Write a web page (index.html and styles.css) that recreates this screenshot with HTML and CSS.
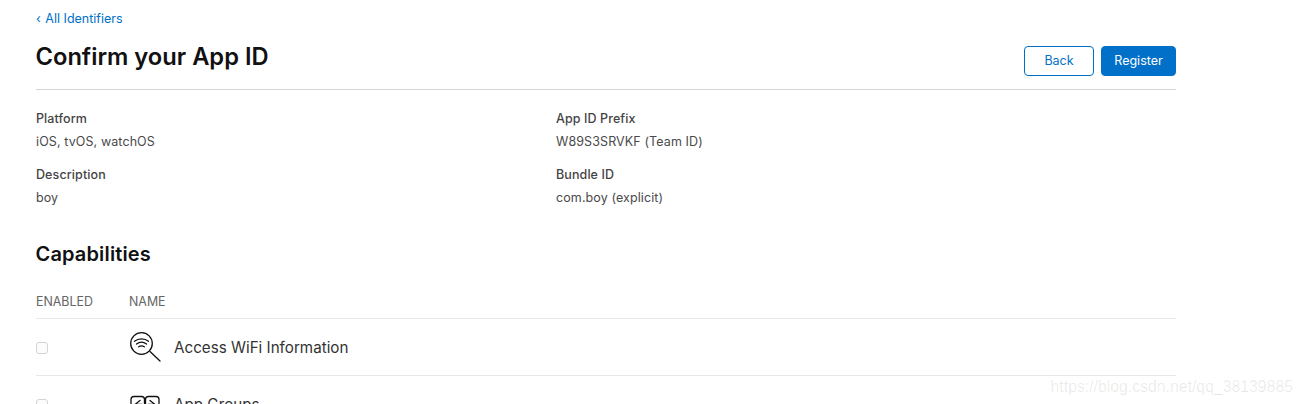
FILE: index.html
```html
<!DOCTYPE html>
<html lang="en">
<head>
  <meta charset="UTF-8" />
  <title>Confirm your App ID</title>
  <link rel="stylesheet" href="styles.css">
</head>
<body>
  <div class="container">
    <a class="back-link" href="#"><span class="chevron">‹</span> All Identifiers</a>

    <div class="header">
      <h1>Confirm your App ID</h1>
      <div class="actions">
        <button class="button outline">Back</button>
        <button class="button primary">Register</button>
      </div>
    </div>

    <div class="details">
      <div class="field">
        <div class="label">Platform</div>
        <div class="value">iOS, tvOS, watchOS</div>
      </div>
      <div class="field">
        <div class="label">App ID Prefix</div>
        <div class="value">W89S3SRVKF (Team ID)</div>
      </div>
      <div class="field">
        <div class="label">Description</div>
        <div class="value">boy</div>
      </div>
      <div class="field">
        <div class="label">Bundle ID</div>
        <div class="value">com.boy (explicit)</div>
      </div>
    </div>

    <h2>Capabilities</h2>

    <div class="table-head">
      <div class="col-enabled">ENABLED</div>
      <div class="col-name">NAME</div>
    </div>

    <div class="row">
      <div class="col-enabled"><span class="checkbox"></span></div>
      <div class="col-name">
        <svg class="cap-icon" viewBox="0 0 32 32" fill="none" stroke="#111" stroke-width="1.3" stroke-linecap="round">
          <circle cx="12.5" cy="12.5" r="10.8" />
          <path d="M21 20.5 L31 30" />
          <path d="M5.5 10.2 C9.5 7 15.5 7 19.5 10.2" />
          <path d="M7.5 13 C10.5 10.8 14.5 10.8 17.5 13" />
          <path d="M9.7 15.8 C11.5 14.6 13.5 14.6 15.3 15.8" />
        </svg>
        <span>Access WiFi Information</span>
      </div>
    </div>

    <div class="row">
      <div class="col-enabled"><span class="checkbox"></span></div>
      <div class="col-name">
        <svg class="cap-icon" viewBox="0 0 32 32" fill="none" stroke="#111" stroke-width="1.3" stroke-linecap="round" stroke-linejoin="round">
          <rect x="2" y="8.5" width="13.5" height="18" rx="3" />
          <rect x="16.5" y="8.5" width="13.5" height="18" rx="3" />
          <path d="M11 12.5 L6 16.5 L11 20.5 M6 16.5 H13" />
          <path d="M21 12.5 L26 16.5 L21 20.5 M26 16.5 H19" />
        </svg>
        <span>App Groups</span>
      </div>
    </div>
  </div>

  <div class="watermark">https://blog.csdn.net/qq_38139885</div>
</body>
</html>
```

FILE: styles.css
```css
html, body {
  height: 100%;
}

body {
  margin: 0;
  background-color: #fff;
  font-family: Inter, 'Liberation Sans', sans-serif;
  color: #333;
  overflow: hidden;
  position: relative;
}

.container {
  width: 1140px;
  margin-left: 36px;
  padding-top: 11px;
}

.back-link {
  display: block;
  font-size: 12.5px;
  line-height: 16px;
  color: #0070c9;
  text-decoration: none;
}

.chevron {
  margin-right: 1px;
}

.header {
  display: flex;
  justify-content: space-between;
  align-items: flex-start;
  height: 62px;
  border-bottom: 1px solid #d6d6d6;
}

h1 {
  margin: 14px 0 0 -0.5px;
  font-size: 23.7px;
  line-height: 32px;
  font-weight: 600;
  color: #111;
}

.actions {
  display: flex;
  gap: 7px;
  margin-top: 19px;
}

.button {
  height: 30px;
  border-radius: 4px;
  font-family: inherit;
  font-size: 12.5px;
  border: 1px solid #0070c9;
  padding: 0 0 2px;
}

.button.outline {
  width: 70px;
  background: #fff;
  color: #0070c9;
}

.button.primary {
  width: 75px;
  background: #0070c9;
  color: #fff;
}

.details {
  display: grid;
  grid-template-columns: 520px 1fr;
  row-gap: 13px;
  margin-top: 19px;
  font-size: 12.5px;
  line-height: 20px;
  letter-spacing: 0.1px;
}

.label {
  font-weight: 500;
  color: #444;
  margin-bottom: 3px;
}

.value {
  color: #4a4a4a;
}

h2 {
  margin: 34px 0 0 -0.5px;
  font-size: 20px;
  line-height: 24px;
  font-weight: 600;
  letter-spacing: 0.15px;
  color: #111;
}

.table-head {
  display: flex;
  align-items: center;
  height: 34px;
  margin-top: 18px;
  font-size: 12.4px;
  color: #666;
  border-bottom: 1px solid #e8e8e8;
}

.col-enabled {
  width: 93px;
  flex-shrink: 0;
  display: flex;
  align-items: center;
}

.col-name {
  display: flex;
  align-items: center;
}

.row {
  display: flex;
  align-items: center;
  height: 56px;
  border-bottom: 1px solid #e8e8e8;
  font-size: 15.2px;
  color: #333;
}

.checkbox {
  display: block;
  width: 10px;
  height: 10px;
  margin-top: 2px;
  border: 1px solid #d4d4d4;
  border-radius: 3px;
  background: #fcfcfc;
}

.cap-icon {
  width: 32px;
  height: 32px;
  margin-right: 13px;
}

.watermark {
  position: absolute;
  right: 10px;
  top: 377px;
  font-family: 'Liberation Sans', sans-serif;
  font-size: 15.8px;
  line-height: 20px;
  color: rgba(0, 0, 0, 0.09);
}
```
